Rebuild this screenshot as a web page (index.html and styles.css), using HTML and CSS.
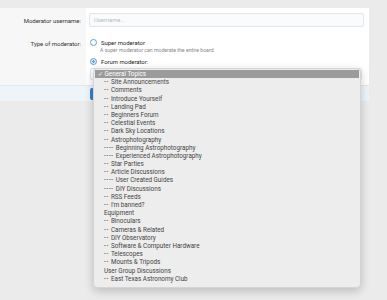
FILE: index.html
```html
<!DOCTYPE html>
<html lang="en">
<head>
  <meta charset="UTF-8">
  <title>Add moderator</title>
  <link rel="stylesheet" href="styles.css">
</head>
<body>
  <div class="page">
    <div class="form">
      <div class="row">
        <div class="label">Moderator username:</div>
        <div class="field">
          <input type="text" class="input" placeholder="Username...">
        </div>
      </div>
      <div class="row row-type">
        <div class="label">Type of moderator:</div>
        <div class="field">
          <div class="radio"><span class="dot"></span>Super moderator</div>
          <div class="hint">A super moderator can moderate the entire board.</div>
          <div class="radio"><span class="dot checked"></span>Forum moderator:</div>
          <div class="select"><span class="arrows">&#8661;</span></div>
        </div>
      </div>
      <div class="footer">
        <span class="button"></span>
      </div>
    </div>

    <ul class="menu" id="menu"></ul>
  </div>

  <script>
    const nodes = [
      ["General Topics", 0],
      ["Site Announcements", 1],
      ["Comments", 1],
      ["Introduce Yourself", 1],
      ["Landing Pad", 1],
      ["Beginners Forum", 1],
      ["Celestial Events", 1],
      ["Dark Sky Locations", 1],
      ["Astrophotography", 1],
      ["Beginning Astrophotography", 2],
      ["Experienced Astrophotography", 2],
      ["Star Parties", 1],
      ["Article Discussions", 1],
      ["User Created Guides", 2],
      ["DIY Discussions", 2],
      ["RSS Feeds", 1],
      ["I'm banned?", 1],
      ["Equipment", 0],
      ["Binoculars", 1],
      ["Cameras & Related", 1],
      ["DIY Observatory", 1],
      ["Software & Computer Hardware", 1],
      ["Telescopes", 1],
      ["Mounts & Tripods", 1],
      ["User Group Discussions", 0],
      ["East Texas Astronomy Club", 1]
    ];

    const menu = document.getElementById("menu");
    nodes.forEach((n, i) => {
      const li = document.createElement("li");
      if (n[1] > 0) {
        const dash = document.createElement("span");
        dash.className = "dash";
        dash.textContent = "--".repeat(n[1]);
        li.appendChild(dash);
      }
      li.appendChild(document.createTextNode(n[0]));
      if (i === 0) li.className = "selected";
      menu.appendChild(li);
    });
  </script>
</body>
</html>
```

FILE: styles.css
```css
body {
  margin: 0;
  background: #ebebeb;
  font-family: 'Roboto', 'Liberation Sans', sans-serif;
  font-size: 6px;
  color: #333;
}
.page {
  position: relative;
  padding-top: 8px;
  height: 292px;
}
.form {
  width: 369px;
  background: #fff;
}
.row {
  display: grid;
  grid-template-columns: 86px 1fr;
}
.label {
  background: #f7f7f7;
  text-align: right;
  padding: 9px 5px 0 0;
  color: #333;
}
.row-type .label {
  padding-top: 13px;
}
.field {
  padding: 5px 5px 0 3px;
}
.input {
  display: block;
  box-sizing: border-box;
  width: 275px;
  height: 14px;
  margin: 0;
  padding: 0 4px;
  border: 1px solid #dfe5ea;
  border-radius: 2px;
  background: #f9fbfc;
  font: inherit;
  font-size: 5.8px;
}
.input::placeholder {
  color: #b5bbc0;
}
.row-type .field {
  padding-top: 11px;
  padding-bottom: 5px;
}
.radio {
  display: flex;
  align-items: center;
  height: 9px;
  padding-left: 1px;
  color: #222;
  font-size: 5.9px;
}
.dot {
  width: 5px;
  height: 5px;
  border: 1px solid #5e9ed6;
  border-radius: 50%;
  margin-right: 4px;
}
.dot.checked {
  background: radial-gradient(circle, #5e9ed6 30%, #dcebf8 40%);
}
.hint {
  font-size: 5.2px;
  color: #888;
  padding-left: 11px;
  margin-bottom: 4px;
}
.select {
  position: relative;
  height: 12px;
  margin: 2px 0 0 1px;
  width: 272px;
  border: 1px solid #dfe5ea;
  border-radius: 2px;
  box-sizing: border-box;
}
.arrows {
  position: absolute;
  right: 1px;
  top: 1px;
  font-size: 7px;
  color: #333;
}
.footer {
  height: 16px;
  background: #edf4fa;
  border-top: 1px solid #e2e9ef;
  box-sizing: border-box;
  padding: 2px 0 0 90px;
}
.button {
  display: block;
  width: 40px;
  height: 12px;
  border-radius: 2px;
  background: #3483c8;
}
.menu {
  position: absolute;
  left: 93px;
  top: 68px;
  width: 268px;
  margin: 0;
  padding: 1px 1px 4px;
  list-style: none;
  background: #ededed;
  border: 1px solid #d4d4d4;
  border-radius: 4px;
  box-shadow: 0 3px 10px rgba(0,0,0,0.2);
  box-sizing: border-box;
}
.menu li {
  height: 8.2px;
  line-height: 8.2px;
  padding-left: 9px;
  font-size: 6.3px;
  color: #444;
  white-space: nowrap;
}
.dash {
  letter-spacing: 0.7px;
  margin-right: 2px;
}
.menu li.selected {
  background: #9b9b9b;
  color: #fff;
  padding-left: 3px;
}
.menu li.selected::before {
  content: "\2713  ";
  white-space: pre;
}
```
